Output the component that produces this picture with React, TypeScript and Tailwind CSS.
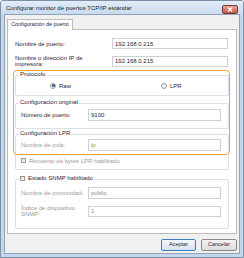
import React from "react";

function Input({ value, disabled, w, h = "h-[12px]" }: { value: string; disabled?: boolean; w: string; h?: string }) {
  return (
    <div
      className={`${w} ${h} shrink-0 border border-[#cdd0d5] bg-white flex items-center pl-[2px] leading-none ${
        disabled ? "text-[#8a8a8a]" : "text-[#2a2536]"
      }`}
    >
      {value}
    </div>
  );
}

function Group({ title, className, children }: { title: React.ReactNode; className: string; children?: React.ReactNode }) {
  return (
    <div className={`relative border border-[#dcdfe3] rounded-[2px] ${className}`}>
      <div className="absolute -top-[5px] left-[3px] bg-white px-[1px] leading-[7px] text-[#2a2536]">{title}</div>
      {children}
    </div>
  );
}

function Checkbox() {
  return <span className="w-[5px] h-[5px] shrink-0 border border-[#9a9a9a] bg-gradient-to-br from-[#dcdcdc] to-[#f7f7f7]" />;
}

function Radio({ checked }: { checked?: boolean }) {
  return (
    <span className="w-[6px] h-[6px] shrink-0 rounded-full border border-[#9aa0a8] bg-[#eef0f2] flex items-center justify-center">
      {checked && <span className="w-[3px] h-[3px] rounded-full bg-[#2f5c8c]" />}
    </span>
  );
}

export default function App() {
  return (
    <div className="w-[244px] h-[258px] flex flex-col border border-[#7d90a8] rounded-t-[3px] bg-[#c5d7ec] pb-[3px] px-[3px] font-['Liberation_Sans',Arial,sans-serif] text-[6px] overflow-hidden">
      {/* Title bar */}
      <div className="h-[13px] flex items-start -mx-[3px] px-[5px] bg-gradient-to-b from-[#e4edf7] to-[#c9daee]">
        <span className="mt-[4px] leading-[7px] text-[#1b1b22] whitespace-nowrap">
          Configurar monitor de puertos TCP/IP estándar
        </span>
        <div className="ml-auto mt-[4px] mr-[0px] w-[16px] h-[9px] rounded-[2px] border border-[#7a3a34] bg-gradient-to-b from-[#e6a69c] to-[#c4544a] flex items-center justify-center">
          <svg width="6" height="5" viewBox="0 0 6 5">
            <path d="M1 0.5 L5 4.5 M5 0.5 L1 4.5" stroke="#fff" strokeWidth="1.2" />
          </svg>
        </div>
      </div>

      {/* Client area */}
      <div className="flex-1 flex flex-col border border-[#8fa3bb] bg-[#f0f0f0]">
        <div className="pt-[4px] pl-[2px]">
          <div className="relative z-10 -mb-[1px] w-[66px] h-[11px] border border-b-0 border-[#bcbcbc] bg-white flex items-center justify-center text-[5.4px] leading-none text-[#2a2536] whitespace-nowrap">
            Configuración de puerto
          </div>
        </div>

        <div className="relative mx-[2px] h-[205px] border border-[#bcbcbc] bg-white px-[7px] flex flex-col">
          <div className="mt-[8px] flex items-center">
            <span className="w-[97px] shrink-0 text-[#2a2536] leading-none">Nombre de puerto:</span>
            <Input value="192.168.0.215" w="w-[116px]" h="h-[11px]" />
          </div>
          <div className="mt-[6px] flex items-center">
            <span className="w-[97px] shrink-0 text-[#2a2536] leading-[6px]">
              Nombre o dirección IP de
              <br />
              impresora:
            </span>
            <Input value="192.168.0.215" w="w-[116px]" h="h-[11px]" />
          </div>

          <Group title="Protocolo" className="mt-[8px] h-[21px] flex items-center">
            <div className="ml-[34px] w-[111px] flex items-center gap-[3px]">
              <Radio checked />
              <span className="text-[#2a2536] leading-none">Raw</span>
            </div>
            <div className="flex items-center gap-[3px]">
              <Radio />
              <span className="text-[#2a2536] leading-none">LPR</span>
            </div>
          </Group>

          <Group title="Configuración original" className="mt-[7px] h-[26px] pt-[5px] pl-[5px]">
            <div className="flex items-center">
              <span className="w-[67px] shrink-0 text-[#2a2536] leading-none">Número de puerto:</span>
              <Input value="9100" w="w-[133px]" />
            </div>
          </Group>

          <Group title="Configuración LPR" className="mt-[5px] h-[36px] pt-[4px] pl-[5px]">
            <div className="flex items-center">
              <span className="w-[67px] shrink-0 text-[#9a9a9a] leading-none">Nombre de cola:</span>
              <Input value="lp" w="w-[133px]" disabled />
            </div>
            <div className="mt-[6px] h-[7px] flex items-center gap-[3px]">
              <Checkbox />
              <span className="text-[#9a9a9a] leading-none">Recuento de bytes LPR habilitado</span>
            </div>
          </Group>

          <Group
            title={
              <span className="flex items-center gap-[3px]">
                <Checkbox />
                <span>Estado SNMP habilitado</span>
              </span>
            }
            className="mt-[9px] h-[50px] pt-[7px] pl-[5px]"
          >
            <div className="flex items-center">
              <span className="w-[67px] shrink-0 text-[#9a9a9a] leading-none">Nombre de comunidad:</span>
              <Input value="public" w="w-[133px]" disabled />
            </div>
            <div className="mt-[6px] flex items-center">
              <span className="w-[67px] shrink-0 text-[#9a9a9a] leading-[6px]">
                Índice de dispositivo
                <br />
                SNMP:
              </span>
              <Input value="1" w="w-[133px]" h="h-[11px]" disabled />
            </div>
          </Group>

          {/* Highlight */}
          <div className="pointer-events-none absolute left-[5px] top-[40px] w-[217px] h-[85px] rounded-[4px] border-[1.5px] border-[#f2a23a]" />
        </div>

        <div className="mt-[5px] mr-[2px] flex justify-end gap-[5px]">
          <button className="w-[35px] h-[12px] rounded-[2px] border border-[#3d7fbd] bg-gradient-to-b from-[#f2f8fd] to-[#d4e4f2] text-[5.5px] leading-none text-[#2a2536]">
            Aceptar
          </button>
          <button className="w-[36px] h-[12px] rounded-[2px] border border-[#8a8a8a] bg-gradient-to-b from-[#f4f4f4] to-[#dcdcdc] text-[5.5px] leading-none text-[#2a2536]">
            Cancelar
          </button>
        </div>
      </div>
    </div>
  );
}
